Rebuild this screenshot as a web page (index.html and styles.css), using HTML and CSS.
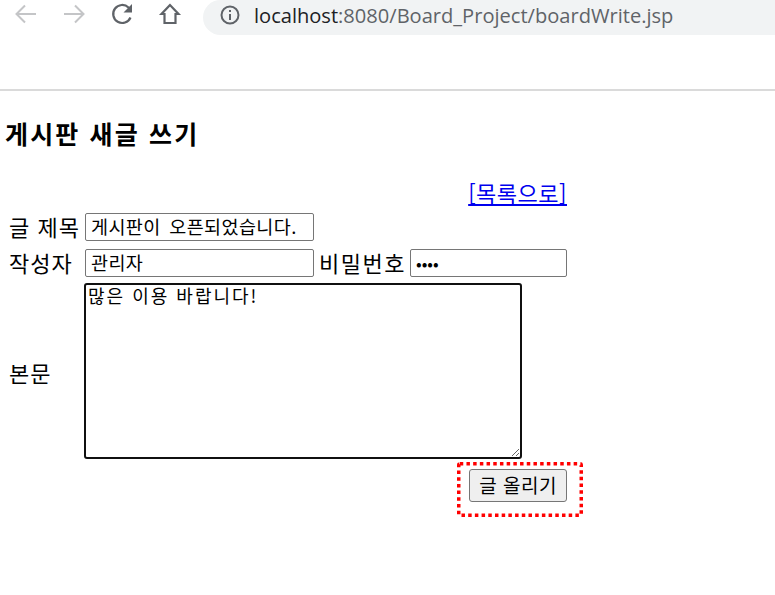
FILE: index.html
```
<!DOCTYPE html>
<html lang="ko">
<head>
<meta charset="utf-8">
<title>boardWrite</title>
<link rel="stylesheet" href="styles.css">
</head>
<body>
<header class="toolbar">
  <div class="nav">
    <svg class="icon" width="26" height="26" viewBox="0 0 26 26"><path d="M23 13H4M12 4.500L3.500 13l8.500 8.500" fill="none" stroke="#c4c5c7" stroke-width="2"/></svg>
    <svg class="icon" width="26" height="26" viewBox="0 0 26 26"><path d="M3 13h19M14 4.500l8.500 8.500-8.500 8.500" fill="none" stroke="#c4c5c7" stroke-width="2"/></svg>
    <svg class="icon" width="26" height="26" viewBox="0 0 26 26"><path d="M21.500 16.500A9 9 0 1 1 19.500 6.500L21.500 9" fill="none" stroke="#5f6368" stroke-width="2.200"/><path d="M23 3v8.500h-8.500z" fill="#5f6368"/></svg>
    <svg class="icon" width="26" height="26" viewBox="0 0 26 26"><path d="M13 4L4.500 13H7.500v9h11v-9h3z" fill="none" stroke="#5f6368" stroke-width="2.200"/></svg>
  </div>
  <div class="omnibox">
    <svg width="20" height="20" viewBox="0 0 20 20"><circle cx="10" cy="10" r="8.500" fill="none" stroke="#5f6368" stroke-width="2"/><path d="M9 9h2v6H9zM9 5h2v2H9z" fill="#5f6368"/></svg>
    <span class="url"><span class="host">localhost</span>:8080/Board_Project/boardWrite.jsp</span>
  </div>
</header>
<main class="page">
  <h3 class="title">게시판 새글 쓰기</h3>
  <form class="board">
    <div class="row-link"><a href="#">[목록으로]</a></div>
    <div class="row">
      <label class="lab">글 제목</label>
      <input class="field wide" type="text" value="게시판이 오픈되었습니다.">
    </div>
    <div class="row">
      <label class="lab">작성자</label>
      <input class="field wide" type="text" value="관리자">
      <label class="lab-pw">비밀번호</label>
      <input class="field pw" type="password" value="1234">
    </div>
    <div class="row-body">
      <label class="lab body-lab">본문</label>
      <textarea class="body-text">많은 이용 바랍니다!</textarea>
    </div>
    <div class="row-submit">
      <div class="highlight">
        <button class="submit" type="button">글 올리기</button>
        <svg class="dots" width="126" height="55" viewBox="0 0 126 55"><rect x="1.750" y="1.750" width="122.500" height="51.500" rx="1" fill="none" stroke="#f00" stroke-width="3.500" stroke-dasharray="3.500 3.200"/></svg>
      </div>
    </div>
  </form>
</main>
</body>
</html>
```
FILE: styles.css
```
html, body {
  margin: 0;
  padding: 0;
  background: #fff;
}
body {
  width: 775px;
  height: 595px;
  overflow: hidden;
  color: #000;
  font-family: "Liberation Sans", "Noto Sans CJK KR", sans-serif;
}
.toolbar {
  height: 89px;
  border-bottom: 2px solid #dadada;
  display: flex;
  align-items: flex-start;
  box-sizing: content-box;
}
.nav {
  display: flex;
  gap: 22px;
  padding: 1px 0 0 13px;
  width: 190px;
  box-sizing: border-box;
}
.icon { display: block; flex: none; }
.omnibox {
  flex: 1;
  height: 35px;
  box-sizing: border-box;
  background: #f1f3f4;
  border-radius: 18px 0 0 18px;
  display: flex;
  align-items: center;
  gap: 14px;
  padding: 0 0 5px 17px;
  margin-left: 13px;
}
.url {
  font-family: "Open Sans", sans-serif;
  font-size: 20.100px;
  letter-spacing: -0.010px;
  color: #5f6368;
  white-space: nowrap;
}
.host { color: #202124; }
.page { padding: 0 0 0 5px; }
.title {
  margin: 27px 0 0;
  font-size: 25px;
  letter-spacing: 2.150px;
  line-height: 30px;
  font-weight: bold;
  font-family: "Noto Sans CJK KR", sans-serif;
}
.board {
  width: 562px;
  margin-top: 31px;
  font-size: 22px;
  font-family: "Noto Sans CJK KR", sans-serif;
}
.row-link {
  height: 34px;
  text-align: right;
  line-height: 26px;
  letter-spacing: 0.500px;
}
.row-link a { color: #0000ee; text-decoration: underline; }
.row {
  display: flex;
  align-items: center;
  height: 28px;
  margin-bottom: 8px;
}
.lab {
  width: 80px;
  flex: none;
  padding: 0 0 3px 4px;
  box-sizing: border-box;
  line-height: 28px;
  letter-spacing: 1px;
  white-space: nowrap;
}
.lab-pw {
  padding: 0 0 3px 5px;
  width: 96px;
  flex: none;
  box-sizing: border-box;
  letter-spacing: 1.500px;
  white-space: nowrap;
}
.field {
  height: 28px;
  box-sizing: border-box;
  border: 1px solid #767676;
  border-radius: 2px;
  padding: 0 5px 2px;
  font-size: 18.500px;
  letter-spacing: 0.400px;
  word-spacing: 3px;
  font-family: "Noto Sans CJK KR", sans-serif;
  background: #fff;
  color: #000;
  margin: 0;
}
.wide { width: 229px; }
.pw { width: 157px; font-size: 16.670px; padding: 1px 5px; letter-spacing: 0; }
.row-body {
  display: flex;
  align-items: center;
  margin-top: -2px;
}
.body-lab { padding: 2px 0 0 4px; }
.body-text {
  width: 438px;
  height: 176px;
  box-sizing: border-box;
  margin: 0 0 0 -1px;
  border: 2px solid #101010;
  border-radius: 3px;
  padding: 0 2px 2px;
  font-size: 18px;
  letter-spacing: 2px;
  font-family: "Noto Sans CJK KR", monospace;
  line-height: 20px;
  background: #fff;
  color: #000;
  display: block;
}
.row-submit {
  display: flex;
  justify-content: flex-end;
  margin: 3px -16px 0 0;
}
.highlight {
  position: relative;
  width: 126px;
  height: 55px;
  box-sizing: border-box;
  display: flex;
  align-items: flex-start;
  justify-content: flex-end;
  padding: 7px 16px 0 0;
}
.dots {
  position: absolute;
  left: 0;
  top: 0;
  display: block;
}
.submit {
  width: 98px;
  height: 33px;
  box-sizing: border-box;
  margin: 0;
  border: 1px solid #767676;
  border-radius: 3px;
  background: #efefef;
  color: #000;
  font-size: 19px;
  letter-spacing: 0.500px;
  font-family: "Noto Sans CJK KR", sans-serif;
  padding: 0 0 2px;
}
```
